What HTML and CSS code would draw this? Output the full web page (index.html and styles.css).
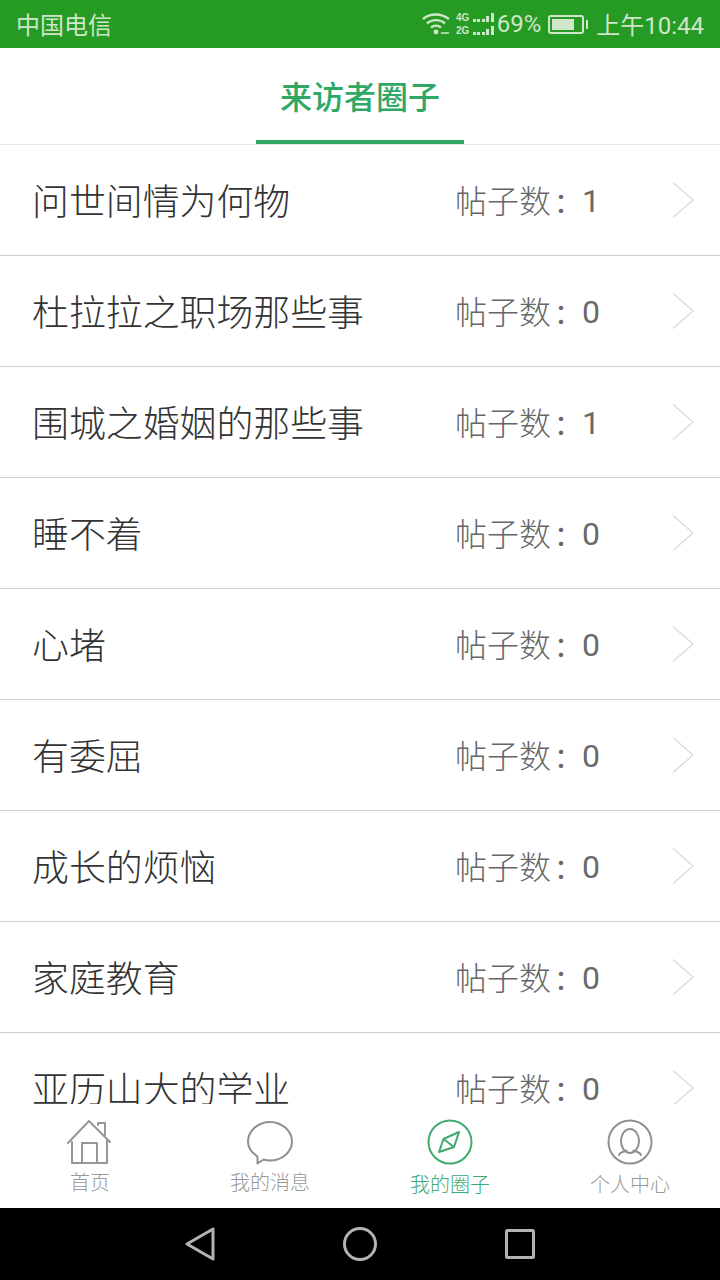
FILE: index.html
```html
<!DOCTYPE html>
<html lang="zh-CN">
<head>
<meta charset="utf-8">
<title>来访者圈子</title>
<link rel="stylesheet" href="styles.css">
</head>
<body>
<div class="app">
  <div class="status">
    <span class="carrier">中国电信</span>
    <div class="status-right">
      <svg class="wifi" width="28" height="24" viewBox="0 0 28 24" fill="none" stroke="#cfe6cb" stroke-width="2.400"><path d="M1 7C8 1 19 1 27 7"/><path d="M5 11.500C10 7 18 7 23 11.500"/><path d="M9 15.500C12 13 16 13 19 15.500"/><circle cx="14" cy="20" r="2.400" fill="#cfe6cb" stroke="none"/><path d="M19 21h8" stroke-width="1.500"/></svg>
      <div class="signal">
        <div class="sig-row"><span class="net">4G</span><i class="b1"></i><i class="b1"></i><i class="b2"></i><i class="b3"></i><i class="b4"></i></div>
        <div class="sig-row"><span class="net">2G</span><i class="b1"></i><i class="b1"></i><i class="b2"></i><i class="b3"></i><i class="b4"></i></div>
      </div>
      <span class="pct">69%</span>
      <div class="battery"><div class="battery-body"><div class="battery-fill"></div></div><div class="battery-tip"></div></div>
      <span class="time">上午10:44</span>
    </div>
  </div>

  <header class="header">
    <div class="tab-title">来访者圈子</div>
  </header>

  <ul class="list">
    <li class="row"><span class="name">问世间情为何物</span><span class="count">帖子数<span class="colon">：</span><b>1</b></span><svg class="chev" width="24" height="38" viewBox="0 0 24 38" fill="none" stroke="#dcdcdc" stroke-width="1.500"><path d="M3 1.500L23 19 3 36.500"/></svg></li>
    <li class="row"><span class="name">杜拉拉之职场那些事</span><span class="count">帖子数<span class="colon">：</span><b>0</b></span><svg class="chev" width="24" height="38" viewBox="0 0 24 38" fill="none" stroke="#dcdcdc" stroke-width="1.500"><path d="M3 1.500L23 19 3 36.500"/></svg></li>
    <li class="row"><span class="name">围城之婚姻的那些事</span><span class="count">帖子数<span class="colon">：</span><b>1</b></span><svg class="chev" width="24" height="38" viewBox="0 0 24 38" fill="none" stroke="#dcdcdc" stroke-width="1.500"><path d="M3 1.500L23 19 3 36.500"/></svg></li>
    <li class="row"><span class="name">睡不着</span><span class="count">帖子数<span class="colon">：</span><b>0</b></span><svg class="chev" width="24" height="38" viewBox="0 0 24 38" fill="none" stroke="#dcdcdc" stroke-width="1.500"><path d="M3 1.500L23 19 3 36.500"/></svg></li>
    <li class="row"><span class="name">心堵</span><span class="count">帖子数<span class="colon">：</span><b>0</b></span><svg class="chev" width="24" height="38" viewBox="0 0 24 38" fill="none" stroke="#dcdcdc" stroke-width="1.500"><path d="M3 1.500L23 19 3 36.500"/></svg></li>
    <li class="row"><span class="name">有委屈</span><span class="count">帖子数<span class="colon">：</span><b>0</b></span><svg class="chev" width="24" height="38" viewBox="0 0 24 38" fill="none" stroke="#dcdcdc" stroke-width="1.500"><path d="M3 1.500L23 19 3 36.500"/></svg></li>
    <li class="row"><span class="name">成长的烦恼</span><span class="count">帖子数<span class="colon">：</span><b>0</b></span><svg class="chev" width="24" height="38" viewBox="0 0 24 38" fill="none" stroke="#dcdcdc" stroke-width="1.500"><path d="M3 1.500L23 19 3 36.500"/></svg></li>
    <li class="row"><span class="name">家庭教育</span><span class="count">帖子数<span class="colon">：</span><b>0</b></span><svg class="chev" width="24" height="38" viewBox="0 0 24 38" fill="none" stroke="#dcdcdc" stroke-width="1.500"><path d="M3 1.500L23 19 3 36.500"/></svg></li>
    <li class="row"><span class="name">亚历山大的学业</span><span class="count">帖子数<span class="colon">：</span><b>0</b></span><svg class="chev" width="24" height="38" viewBox="0 0 24 38" fill="none" stroke="#dcdcdc" stroke-width="1.500"><path d="M3 1.500L23 19 3 36.500"/></svg></li>
  </ul>

  <nav class="tabbar">
    <div class="tab">
      <svg width="46" height="46" viewBox="0 0 46 46" fill="none" stroke="#969696" stroke-width="2" stroke-linejoin="round" stroke-linecap="round"><path d="M1 24L22 2 43 23"/><path d="M31 6V4h7v12"/><path d="M5 23v21h35V21"/><path d="M15 44V24h15v20"/></svg>
      <span class="tab-label">首页</span>
    </div>
    <div class="tab">
      <svg width="46" height="46" viewBox="0 0 46 46" fill="none" stroke="#8f8f8f" stroke-width="2" stroke-linejoin="round"><path d="M10.500 37.500C5 34 1 28.500 1 22.500 1 12 11 3 23 3S45 12 45 22.500 35 41.500 23 41.500c-2.500 0-4.500-.300-6.500-1L10.500 44.500z"/></svg>
      <span class="tab-label">我的消息</span>
    </div>
    <div class="tab tab-low active">
      <svg width="46" height="46" viewBox="0 0 46 46" fill="none" stroke="#3fa970" stroke-width="2" stroke-linejoin="round"><circle cx="23" cy="23" r="21.500"/><path d="M32 13L27 28 12 33 16.500 20z"/><path d="M16.500 20L27 28"/></svg>
      <span class="tab-label">我的圈子</span>
    </div>
    <div class="tab tab-low">
      <svg width="46" height="46" viewBox="0 0 46 46" fill="none" stroke="#8f8f8f" stroke-width="2" stroke-linecap="round"><circle cx="23" cy="23" r="21.500"/><ellipse cx="23" cy="22" rx="9" ry="12"/><path d="M12 36c1-2.500 4-3.500 7.500-4.500"/><path d="M34 36c-1-2.500-4-3.500-7.500-4.500"/></svg>
      <span class="tab-label">个人中心</span>
    </div>
  </nav>

  <div class="sysnav">
    <svg width="30" height="34" viewBox="0 0 30 34" fill="none" stroke="#b3b3b3" stroke-width="3" stroke-linejoin="round"><path d="M28 2v30L2 17z"/></svg>
    <svg width="34" height="34" viewBox="0 0 34 34" fill="none" stroke="#b3b3b3" stroke-width="3"><circle cx="17" cy="17" r="15.500"/></svg>
    <svg width="30" height="30" viewBox="0 0 30 30" fill="none" stroke="#b3b3b3" stroke-width="3" stroke-linejoin="round"><rect x="1.500" y="1.500" width="27" height="27" rx="1"/></svg>
  </div>
</div>
</body>
</html>
```
FILE: styles.css
```css
* { box-sizing: border-box; }
html, body { margin: 0; padding: 0; }
body {
  width: 720px;
  height: 1280px;
  overflow: hidden;
  background: #fff;
  font-family: "Roboto", "Noto Sans CJK SC", sans-serif;
}
.app {
  width: 720px;
  height: 1280px;
  display: flex;
  flex-direction: column;
}
.status {
  height: 48px;
  flex: none;
  background: #259b24;
  color: #cfe6cb;
  display: flex;
  align-items: center;
  justify-content: space-between;
  padding: 0 16px 0 16px;
  font-size: 24px;
}
.carrier { font-family: "Noto Sans CJK SC", sans-serif; margin-bottom: 2px; }
.status-right { display: flex; align-items: center; }
.wifi { margin-right: 6px; }
.signal { display: flex; flex-direction: column; gap: 4px; margin-right: 3px; width: 38px; }
.sig-row { display: flex; align-items: flex-end; height: 9px; gap: 1.500px; }
.net { font: 700 11px/9px "Liberation Sans", sans-serif; width: 15px; margin-right: .5px; transform: scaleX(.9); transform-origin: left; }
.sig-row i { display: block; width: 3px; background: #cfe6cb; }
.b1 { height: 3px; }
.b2 { height: 3px; }
.b3 { height: 6px; }
.b4 { height: 9px; }
.pct { font-size: 24px; margin-right: 7px; }
.battery { display: flex; align-items: center; margin-right: 8px; }
.battery-body { width: 36px; height: 19px; border: 2px solid #cfe6cb; border-radius: 3px; padding: 2px; }
.battery-fill { width: 22px; height: 100%; background: #cfe6cb; }
.battery-tip { width: 2px; height: 9px; background: #cfe6cb; margin-left: 2px; }
.time { font-size: 24px; margin-bottom: 2px; }

.header {
  height: 97px;
  flex: none;
  display: flex;
  justify-content: center;
  background: #fff;
  border-bottom: 1px solid #eaeaea;
}
.tab-title {
  width: 208px;
  height: 96px;
  text-align: center;
  line-height: 95px;
  font-family: "Noto Sans CJK SC", sans-serif;
  font-size: 32px;
  font-weight: 500;
  color: #2fa866;
  border-bottom: 4px solid #2fa866;
}

.list {
  flex: 1;
  min-height: 0;
  margin: 0;
  padding: 0;
  list-style: none;
  overflow: hidden;
}
.row {
  height: 111px;
  display: flex;
  align-items: center;
  padding: 0 26px 0 32px;
  border-bottom: 1px solid #cfcfcf;
}
.name {
  flex: 1;
  font-family: "Noto Sans CJK SC", sans-serif;
  font-size: 36.900px;
  font-weight: 300;
  color: #333;
  white-space: nowrap;
  margin-bottom: 2px;
}
.count {
  font-family: "Noto Sans CJK SC", sans-serif;
  font-size: 32px;
  font-weight: 300;
  color: #666;
  width: 192px;
  white-space: nowrap;
  margin-bottom: 2px;
}
.colon { font-size: 28px; font-weight: 400; margin-left: 3px; }
.count b { font-family: "Roboto", sans-serif; font-weight: 400; color: #6a6a6a; vertical-align: 1px; }
.chev { flex: none; margin-left: 23px; }

.tabbar {
  height: 104px;
  flex: none;
  background: #fff;
  display: flex;
}
.tab {
  flex: 1;
  display: flex;
  flex-direction: column;
  align-items: center;
  padding-top: 15px;
  color: #999;
}
.tab-label {
  font-family: "Noto Sans CJK SC", sans-serif;
  font-size: 20px;
  font-weight: 300;
  line-height: 30px;
  margin-top: 2px;
}
.tab-low .tab-label { margin-top: 4px; }
.tab.active { color: #3fa970; }

.sysnav {
  height: 72px;
  flex: none;
  background: #000;
  display: flex;
  align-items: center;
  justify-content: center;
  gap: 128px;
}
```
